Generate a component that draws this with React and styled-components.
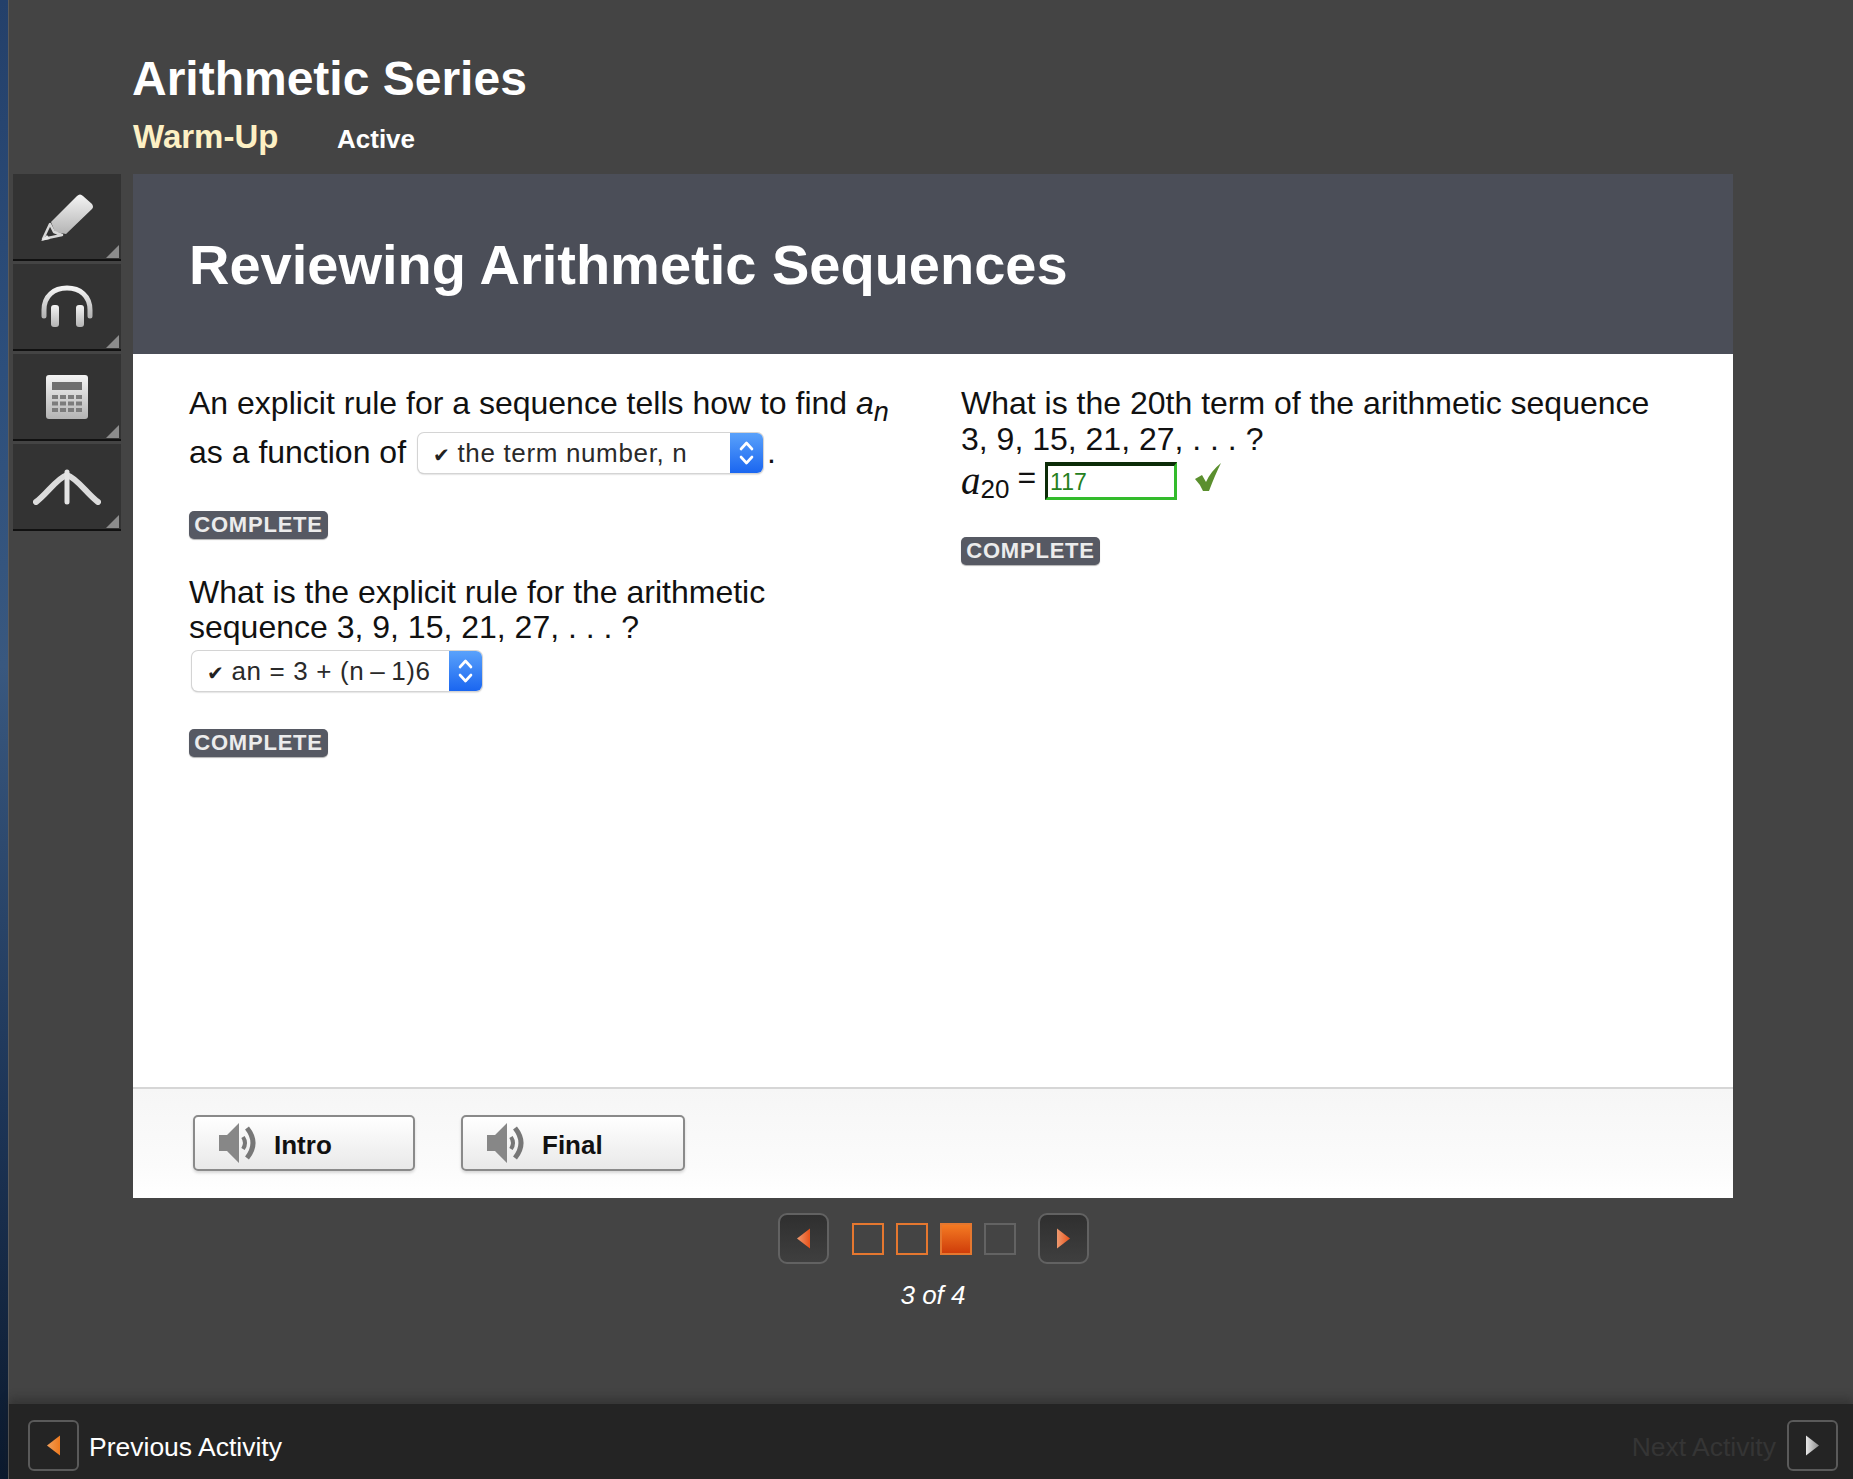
import React from "react";
import styled, { createGlobalStyle } from "styled-components";

const GlobalStyle = createGlobalStyle`
  html, body {
    margin: 0;
    padding: 0;
    height: 100%;
    overflow: hidden;
    background: #444;
    font-family: "Liberation Sans", Arial, sans-serif;
  }
`;

const Shell = styled.div`
  width: 1853px;
  height: 1479px;
  display: flex;
  overflow: hidden;
`;

const Desktop = styled.div`
  width: 8px;
  flex: none;
  background: linear-gradient(180deg, #24406a 0%, #2d4f7c 25%, #39587f 45%, #1d3557 75%, #0c1a2e 100%);
`;

const Page = styled.div`
  flex: 1;
  display: flex;
  flex-direction: column;
  border-left: 1px solid #5a5a5a;
  min-width: 0;
`;

const Main = styled.div`
  flex: 1;
  background: #444444;
  display: flex;
  flex-direction: column;
`;

const Heading = styled.div`
  height: 174px;
  box-sizing: border-box;
  padding: 49px 0 0 124px;
`;

const LessonTitle = styled.h1`
  margin: 0;
  font-size: 48px;
  line-height: 60px;
  font-weight: 700;
  color: #fff;
  margin-left: -1px;
`;

const SubRow = styled.div`
  display: flex;
  align-items: baseline;
  margin-top: 8px;
`;

const Section = styled.span`
  font-size: 33px;
  line-height: 40px;
  font-weight: 700;
  color: #fdf0c4;
  width: 204px;
`;

const Status = styled.span`
  font-size: 26px;
  font-weight: 700;
  color: #fff;
`;

const Workspace = styled.div`
  display: flex;
  align-items: flex-start;
`;

const Sidebar = styled.div`
  width: 108px;
  margin: 0 12px 0 4px;
  display: flex;
  flex-direction: column;
`;

const ToolTab = styled.div`
  position: relative;
  height: 85px;
  margin-bottom: 3px;
  background: #333333;
  border-bottom: 2px solid #111;
  display: flex;
  align-items: center;
  justify-content: center;

  &::after {
    content: "";
    position: absolute;
    right: 2px;
    bottom: 1px;
    border-style: solid;
    border-width: 0 0 13px 13px;
    border-color: transparent transparent #8c8c8c transparent;
  }
`;

const Card = styled.div`
  width: 1600px;
  display: flex;
  flex-direction: column;
`;

const CardHeader = styled.div`
  height: 180px;
  background: #4b4e58;
  display: flex;
  align-items: center;
  padding-left: 56px;
`;

const CardTitle = styled.h2`
  margin: 0;
  font-size: 56px;
  font-weight: 700;
  color: #fff;
`;

const CardBody = styled.div`
  height: 733px;
  background: #fff;
  box-sizing: border-box;
  padding: 32px 0 0 56px;
  display: grid;
  grid-template-columns: 772px 1fr;
`;

const Column = styled.div`
  display: flex;
  flex-direction: column;
`;

const Prompt = styled.div`
  font-size: 32px;
  line-height: 35.5px;
  color: #111;
  display: ${(p) => (p.$row ? "flex" : "block")};
  align-items: center;
  margin-top: ${(p) => p.$top || 0}px;
`;

const Sub = styled.sub`
  font-size: 27px;
  font-style: italic;
  line-height: 0;
`;

const Select = styled.div`
  width: ${(p) => p.$width}px;
  height: 40px;
  margin-left: ${(p) => p.$left}px;
  margin-top: ${(p) => p.$top || 0}px;
  box-sizing: border-box;
  display: flex;
  background: #fff;
  border-radius: 6px;
  box-shadow: 0 0 0 1px #d4d4d4, 0 1px 2px rgba(0, 0, 0, 0.35);
  overflow: hidden;
`;

const SelectLabel = styled.div`
  flex: 1;
  padding-left: 15px;
  font-size: 26px;
  line-height: 40px;
  color: #2a2a2a;
  white-space: pre;
  letter-spacing: 0.65px;
`;

const Tick = styled.span`
  font-family: "DejaVu Sans", sans-serif;
  font-size: 20px;
  margin-right: 7px;
  color: #222;
`;

const Period = styled.span`
  margin-left: 4px;
`;

const Stepper = styled.div`
  width: 33px;
  flex: none;
  background: linear-gradient(180deg, #5aa2fb 0%, #1a66f0 100%);
  display: flex;
  align-items: center;
  justify-content: center;
`;

const Complete = styled.div`
  width: 139px;
  height: 28px;
  border-radius: 5px;
  background: #565963;
  box-shadow: 0 1px 1px rgba(0, 0, 0, 0.3);
  color: #ececec;
  font-size: 22px;
  font-weight: 700;
  line-height: 28px;
  text-align: center;
  letter-spacing: 0.8px;
  margin-top: ${(p) => p.$top}px;
`;

const Answer = styled.div`
  display: flex;
  align-items: center;
  height: 39px;
  margin-top: 4px;
`;

const MathVar = styled.span`
  font-family: "Liberation Serif", serif;
  font-style: italic;
  font-size: 39px;
  color: #111;
`;

const MathSub = styled.span`
  font-size: 26px;
  color: #111;
  position: relative;
  top: 9px;
`;

const MathEq = styled.span`
  font-size: 32px;
  color: #111;
  margin: 0 9px 0 8px;
  position: relative;
  top: -3px;
`;

const AnswerBox = styled.div`
  width: 132px;
  height: 38px;
  box-sizing: border-box;
  border: 3px solid #33bb2c;
  border-top: 4px solid #0c2c08;
  border-left-color: #0c2c08;
  font-size: 23px;
  line-height: 32px;
  padding-left: 2px;
  color: #25801e;
`;

const CheckMark = styled.svg`
  margin-left: 17px;
  margin-top: -8px;
`;

const CardFooter = styled.div`
  height: 111px;
  box-sizing: border-box;
  border-top: 2px solid #d6d6d6;
  background: linear-gradient(180deg, #f6f6f6 0%, #fbfbfb 70%, #fff 100%);
  display: flex;
  padding: 26px 0 0 60px;
  gap: 46px;
`;

const AudioButton = styled.div`
  width: ${(p) => p.$width}px;
  height: 56px;
  box-sizing: border-box;
  border: 2px solid #8a8a8a;
  border-radius: 5px;
  background: linear-gradient(180deg, #fff 0%, #e9e9e9 100%);
  box-shadow: 0 2px 3px rgba(0, 0, 0, 0.15);
  display: flex;
  align-items: center;
  padding-left: 23px;
  font-size: 26px;
  font-weight: 700;
  color: #111;
`;

const AudioLabel = styled.span`
  margin-left: 16px;
  position: relative;
  top: 2px;
`;

const Pager = styled.div`
  display: flex;
  align-items: center;
  justify-content: center;
  margin: 15px 0 0 124px;
  width: 1600px;
`;

const ArrowButton = styled.div`
  width: 51px;
  height: 51px;
  flex: none;
  box-sizing: border-box;
  border: 2px solid ${(p) => (p.$flat ? "#5a5a5a" : "#626262")};
  border-radius: ${(p) => (p.$flat ? 6 : 9)}px;
  background: ${(p) => (p.$flat ? "#242424" : "linear-gradient(180deg, #2f2f2f 0%, #3f3f3f 100%)")};
  display: flex;
  align-items: center;
  justify-content: center;
`;

const Squares = styled.div`
  display: flex;
  gap: 12px;
  margin: 0 22px 0 23px;
`;

const Square = styled.div`
  width: 32px;
  height: 32px;
  box-sizing: border-box;
  border: 2px solid ${(p) => (p.$muted ? "#636363" : "#e5772f")};
  background: ${(p) => (p.$active ? "linear-gradient(180deg, #f47a22 0%, #cf3d0a 100%)" : "transparent")};
`;

const PageCount = styled.div`
  margin: 16px 0 0 124px;
  width: 1600px;
  text-align: center;
  font-size: 26px;
  font-style: italic;
  line-height: 30px;
  color: #fff;
`;

const BottomBar = styled.div`
  height: 75px;
  flex: none;
  background: #242424;
  box-shadow: 0 -6px 8px rgba(30, 30, 30, 0.35);
  box-sizing: border-box;
  padding: 16px 15px 0 19px;
  display: flex;
  align-items: flex-start;
`;

const ActivityLabel = styled.span`
  font-size: 26.5px;
  line-height: 55px;
  color: ${(p) => (p.$dim ? "#353535" : "#fff")};
  margin: ${(p) => (p.$dim ? "0 11px 0 auto" : "0 0 0 10px")};
`;

const Triangle = ({ dir = "right", from, to }) => {
  const id = `tri-${dir}-${from.slice(1)}`;
  return (
    <svg width="13" height="21" viewBox="0 0 13 20">
      <defs>
        <linearGradient id={id} x1="0" x2="1" y1="0" y2="0">
          <stop offset="0" stopColor={dir === "right" ? from : to} />
          <stop offset="1" stopColor={dir === "right" ? to : from} />
        </linearGradient>
      </defs>
      <path d={dir === "right" ? "M0 0 L13 10 L0 20 Z" : "M13 0 L0 10 L13 20 Z"} fill={`url(#${id})`} />
    </svg>
  );
};

const StepperIcon = () => (
  <svg width="17" height="28" viewBox="0 0 17 28" fill="none" stroke="#fff" strokeWidth="2.6" strokeLinecap="round" strokeLinejoin="round">
    <path d="M3 10 L8.5 4 L14 10" />
    <path d="M3 18 L8.5 24 L14 18" />
  </svg>
);

const HiddenDefs = styled.svg`
  position: absolute;
  width: 0;
  height: 0;
`;

const ToolGradient = () => (
  <HiddenDefs>
    <defs>
      <linearGradient id="tool" x1="0" x2="0" y1="0" y2="1">
        <stop offset="0" stopColor="#f4f4f4" />
        <stop offset="1" stopColor="#b4b4b4" />
      </linearGradient>
    </defs>
  </HiddenDefs>
);

const PencilIcon = () => (
  <svg width="56" height="52" viewBox="0 0 56 52">
    <path d="M12 31 L38 5 Q41 2 44 5 L53 13 Q55 16 53 18 L27 43 L16 41 Z" fill="url(#tool)" />
    <path d="M11 33 L4 48 L23 44 L15 41 Z" fill="none" stroke="#d8d8d8" strokeWidth="2.5" strokeLinejoin="round" />
    <path d="M2 50 L8 44 L11 48 Z" fill="#e8e8e8" />
  </svg>
);

const HeadphonesIcon = () => (
  <svg width="54" height="44" viewBox="0 0 54 44">
    <path d="M4 31 V25 C4 11 14 3 27 3 C40 3 50 11 50 25 V31" fill="none" stroke="url(#tool)" strokeWidth="5" strokeLinecap="round" />
    <rect x="11" y="20" width="8" height="22" rx="3" fill="url(#tool)" />
    <rect x="36" y="20" width="8" height="22" rx="3" fill="url(#tool)" />
  </svg>
);

const CalculatorIcon = () => (
  <svg width="44" height="46" viewBox="0 0 44 46">
    <rect x="1" y="1" width="42" height="44" rx="3" fill="url(#tool)" />
    <rect x="7" y="8" width="30" height="8" fill="#6f6f6f" />
    {[21, 27.5, 34].map((y) =>
      [7, 15, 23, 31].map((x) => <rect key={`${x}-${y}`} x={x} y={y} width="6" height="4" fill="#7c7c7c" />)
    )}
  </svg>
);

const ProtractorIcon = () => (
  <svg width="68" height="36" viewBox="0 0 68 36" fill="none" strokeLinecap="round">
    <path d="M3 33 C14 25 24 9 34 6 C44 9 54 25 65 33" strokeWidth="6" stroke="#dcdcdc" />
    <path d="M34 3 V33" strokeWidth="5" stroke="#e4e4e4" />
  </svg>
);

const SpeakerIcon = () => (
  <svg width="40" height="42" viewBox="0 0 40 42">
    <path d="M1 13 H9 L21 1 V41 L9 29 H1 Z" fill="#878787" />
    <path d="M25 15 Q29 21 25 27" fill="none" stroke="#777" strokeWidth="4" />
    <path d="M29 6 Q41 21 29 36" fill="none" stroke="#777" strokeWidth="5" />
  </svg>
);

const SoundButton = ({ width, label }) => (
  <AudioButton $width={width}>
    <SpeakerIcon />
    <AudioLabel>{label}</AudioLabel>
  </AudioButton>
);

const Dropdown = ({ width, left, top, label }) => (
  <Select $width={width} $left={left} $top={top}>
    <SelectLabel>
      <Tick>✔</Tick>
      {label}
    </SelectLabel>
    <Stepper>
      <StepperIcon />
    </Stepper>
  </Select>
);

export default function App() {
  return (
    <Shell>
      <GlobalStyle />
      <ToolGradient />
      <Desktop />
      <Page>
        <Main>
          <Heading>
            <LessonTitle>Arithmetic Series</LessonTitle>
            <SubRow>
              <Section>Warm-Up</Section>
              <Status>Active</Status>
            </SubRow>
          </Heading>
          <Workspace>
            <Sidebar>
              <ToolTab><PencilIcon /></ToolTab>
              <ToolTab><HeadphonesIcon /></ToolTab>
              <ToolTab><CalculatorIcon /></ToolTab>
              <ToolTab><ProtractorIcon /></ToolTab>
            </Sidebar>
            <Card>
              <CardHeader>
                <CardTitle>Reviewing Arithmetic Sequences</CardTitle>
              </CardHeader>
              <CardBody>
                <Column>
                  <Prompt>
                    An explicit rule for a sequence tells how to find <i>a</i><Sub>n</Sub>
                  </Prompt>
                  <Prompt $row $top={11}>
                    as a function of
                    <Dropdown width={345} left={12} label="the term number, n" />
                    <Period>.</Period>
                  </Prompt>
                  <Complete $top={38}>COMPLETE</Complete>
                  <Prompt $top={36}>
                    What is the explicit rule for the arithmetic
                    <br />
                    sequence 3, 9, 15, 21, 27, . . . ?
                  </Prompt>
                  <Dropdown width={290} left={3} top={5} label={"an = 3 + (n\u2009–\u20091)6"} />
                  <Complete $top={38}>COMPLETE</Complete>
                </Column>
                <Column>
                  <Prompt>
                    What is the 20th term of the arithmetic sequence
                    <br />
                    3, 9, 15, 21, 27, . . . ?
                  </Prompt>
                  <Answer>
                    <MathVar>a</MathVar>
                    <MathSub>20</MathSub>
                    <MathEq>=</MathEq>
                    <AnswerBox>117</AnswerBox>
                    <CheckMark width="28" height="30" viewBox="0 0 28 30">
                      <path d="M1 17 L8 13 L12 20 Q17 9 27 1 Q21 13 15 29 L9 29 Q6 22 1 17 Z" fill="#5b8f2e" />
                    </CheckMark>
                  </Answer>
                  <Complete $top={37}>COMPLETE</Complete>
                </Column>
              </CardBody>
              <CardFooter>
                <SoundButton width={222} label="Intro" />
                <SoundButton width={224} label="Final" />
              </CardFooter>
            </Card>
          </Workspace>
          <Pager>
            <ArrowButton>
              <Triangle dir="left" from="#e8521a" to="#ee9a70" />
            </ArrowButton>
            <Squares>
              <Square />
              <Square />
              <Square $active />
              <Square $muted />
            </Squares>
            <ArrowButton>
              <Triangle dir="right" from="#ee9a70" to="#e8521a" />
            </ArrowButton>
          </Pager>
          <PageCount>3 of 4</PageCount>
        </Main>
        <BottomBar>
          <ArrowButton $flat>
            <Triangle dir="left" from="#ef7a1e" to="#f2a05a" />
          </ArrowButton>
          <ActivityLabel>Previous Activity</ActivityLabel>
          <ActivityLabel $dim>Next Activity</ActivityLabel>
          <ArrowButton $flat>
            <Triangle dir="right" from="#e8e8e8" to="#8a8a8a" />
          </ArrowButton>
        </BottomBar>
      </Page>
    </Shell>
  );
}
